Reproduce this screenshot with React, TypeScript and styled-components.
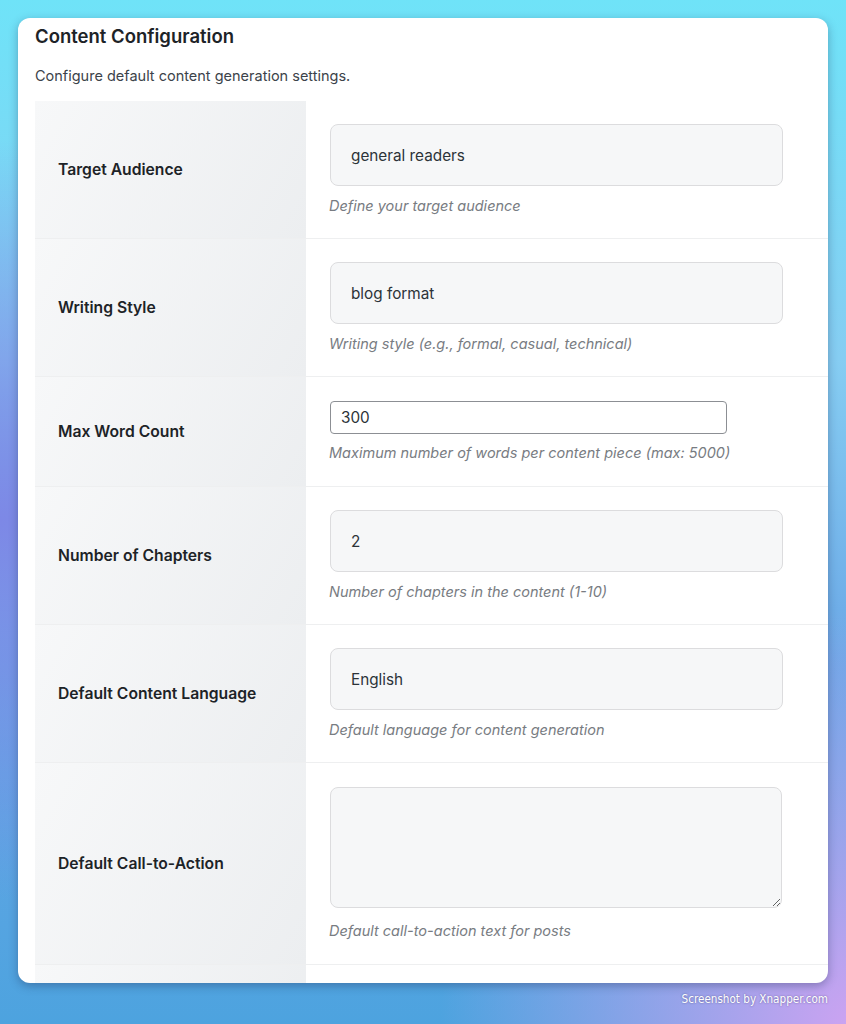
import React from "react";
import styled, { createGlobalStyle } from "styled-components";

const Global = createGlobalStyle`
  html, body { margin: 0; padding: 0; }
  body { font-family: Inter, "Noto Sans", sans-serif; }
  * { box-sizing: border-box; }
`;

const Page = styled.div`
  width: 846px;
  height: 1024px;
  overflow: hidden;
  padding: 18px 18px 0 18px;
  display: flex;
  flex-direction: column;
  align-items: stretch;
  background:
    radial-gradient(ellipse 420px 420px at 860px 1030px, #cfa3f2 0%, rgba(207,163,242,0) 100%),
    radial-gradient(ellipse 500px 380px at 0px 520px, #7d88e6 0%, rgba(125,136,230,0) 100%),
    linear-gradient(180deg, #6fe3f8 0%, #86cdf2 35%, #6aa7e6 65%, #4da3df 100%);
`;

const Card = styled.div`
  width: 810px;
  height: 965px;
  background: #ffffff;
  border-radius: 12px;
  overflow: hidden;
  padding: 0 0 0 17px;
  box-shadow: 0 3px 10px rgba(30, 40, 80, 0.35);
  display: flex;
  flex-direction: column;
`;

const Title = styled.h2`
  margin: 0;
  padding-top: 7px;
  font-size: 18.5px;
  line-height: 22px;
  font-weight: 600;
  color: #1d2327;
`;

const Intro = styled.p`
  margin: 19px 0 0 0;
  font-size: 14.5px;
  line-height: 20px;
  color: #3c434a;
`;

const Table = styled.div`
  margin-top: 15px;
  display: flex;
  flex-direction: column;
`;

const Row = styled.div`
  display: grid;
  grid-template-columns: 271px 1fr;
  border-bottom: 1px solid #eeeff0;
`;

const LabelCell = styled.div`
  background: linear-gradient(120deg, #f7f8f9 0%, #eceef0 100%);
  display: flex;
  align-items: center;
  padding-left: 23px;
  font-size: 15.7px;
  font-weight: 600;
  color: #1d2327;
`;

const ValueCell = styled.div<{ $top: number; $bottom: number }>`
  padding: ${(p) => p.$top}px 0 ${(p) => p.$bottom}px 24px;
  display: flex;
  flex-direction: column;
  align-items: flex-start;
`;

const SoftInput = styled.input`
  display: block;
  width: 453px;
  height: 62px;
  padding: 0 20px;
  background: #f6f7f8;
  border: 1px solid #dcdcde;
  border-radius: 8px;
  font-family: inherit;
  font-size: 15.3px;
  color: #2c3338;
  outline: none;
`;

const PlainInput = styled.input`
  display: block;
  width: 397px;
  height: 33px;
  padding: 0 10px;
  background: #ffffff;
  border: 1px solid #8c8f94;
  border-radius: 4px;
  font-family: inherit;
  font-size: 15.3px;
  color: #2c3338;
  outline: none;
`;

const Area = styled.textarea`
  display: block;
  width: 452px;
  height: 121px;
  padding: 10px 20px;
  background: #f6f7f8;
  border: 1px solid #dcdcde;
  border-radius: 8px;
  font-family: inherit;
  font-size: 15.3px;
  color: #2c3338;
  outline: none;
  resize: vertical;
`;

const Hint = styled.p<{ $gap: number }>`
  margin: ${(p) => p.$gap}px 0 0 -1px;
  font-size: 14.5px;
  line-height: 20px;
  font-style: italic;
  color: #787c82;
`;

const Watermark = styled.div`
  margin-top: 9px;
  align-self: flex-end;
  font-family: "DejaVu Sans Condensed", "Liberation Sans Narrow", "Liberation Sans", sans-serif;
  font-stretch: condensed;
  font-size: 11.6px;
  color: #ffffff;
  text-shadow: 0 0 2px rgba(40, 40, 90, 0.6);
`;

type Field = {
  label: string;
  kind: "soft" | "plain" | "area";
  value: string;
  hint: string;
};

const fields: Field[] = [
  { label: "Target Audience", kind: "soft", value: "general readers", hint: "Define your target audience" },
  { label: "Writing Style", kind: "soft", value: "blog format", hint: "Writing style (e.g., formal, casual, technical)" },
  { label: "Max Word Count", kind: "plain", value: "300", hint: "Maximum number of words per content piece (max: 5000)" },
  { label: "Number of Chapters", kind: "soft", value: "2", hint: "Number of chapters in the content (1-10)" },
  { label: "Default Content Language", kind: "soft", value: "English", hint: "Default language for content generation" },
  { label: "Default Call-to-Action", kind: "area", value: "", hint: "Default call-to-action text for posts" },
];

export default function App() {
  return (
    <>
      <Global />
      <Page>
        <Card>
          <Title>Content Configuration</Title>
          <Intro>Configure default content generation settings.</Intro>
          <Table>
            {fields.map((f) => (
              <Row key={f.label}>
                <LabelCell>{f.label}</LabelCell>
                <ValueCell $top={f.kind === "soft" ? 23 : 24} $bottom={f.kind === "soft" ? 22 : 23}>
                  {f.kind === "soft" && <SoftInput defaultValue={f.value} />}
                  {f.kind === "plain" && <PlainInput defaultValue={f.value} />}
                  {f.kind === "area" && <Area defaultValue={f.value} />}
                  <Hint $gap={f.kind === "area" ? 13 : f.kind === "plain" ? 9 : 10}>{f.hint}</Hint>
                </ValueCell>
              </Row>
            ))}
            <Row>
              <LabelCell style={{ height: 60 }} />
              <ValueCell $top={24} $bottom={24} />
            </Row>
          </Table>
        </Card>
        <Watermark>Screenshot by Xnapper.com</Watermark>
      </Page>
    </>
  );
}
